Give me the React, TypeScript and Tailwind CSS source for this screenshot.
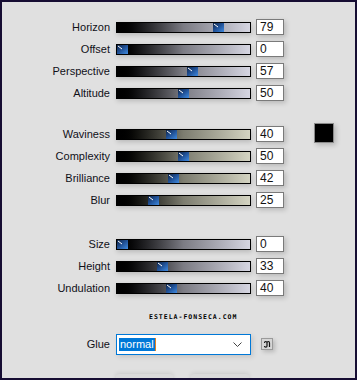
import React from "react";

type Row = { label: string; value: number };

const groupOne: Row[] = [
  { label: "Horizon", value: 79 },
  { label: "Offset", value: 0 },
  { label: "Perspective", value: 57 },
  { label: "Altitude", value: 50 },
];

const groupTwo: Row[] = [
  { label: "Waviness", value: 40 },
  { label: "Complexity", value: 50 },
  { label: "Brilliance", value: 42 },
  { label: "Blur", value: 25 },
];

const groupThree: Row[] = [
  { label: "Size", value: 0 },
  { label: "Height", value: 33 },
  { label: "Undulation", value: 40 },
];

const Thumb = ({ value }: { value: number }) => (
  <svg
    width="11"
    height="9"
    viewBox="0 0 11 9"
    className="absolute top-0"
    style={{ left: (value / 100) * (133 - 11) }}
  >
    <defs>
      <linearGradient id="thumbGrad" x1="0" y1="0" x2="1" y2="1">
        <stop offset="0" stopColor="#0f2445" />
        <stop offset="0.45" stopColor="#1f4e92" />
        <stop offset="1" stopColor="#3f8ae0" />
      </linearGradient>
    </defs>
    <rect x="0" y="0" width="11" height="9" fill="url(#thumbGrad)" />
    <line x1="1" y1="1" x2="5" y2="4" stroke="#ffffff" strokeWidth="1" />
  </svg>
);

const SliderRow = ({
  row,
  tone,
  extra,
}: {
  row: Row;
  tone: "lilac" | "khaki";
  extra?: React.ReactNode;
}) => (
  <div className="flex h-[22px] items-center">
    <div className="w-[108px] text-right text-[11px] text-[#101018]">
      {row.label}
    </div>
    <div
      className={
        tone === "lilac"
          ? "relative ml-[6px] h-[11px] w-[135px] border border-black bg-gradient-to-r from-black via-[#7c7c84] to-[#d6d6e2] shadow-[1px_2px_5px_rgba(0,0,0,0.18)]"
          : "relative ml-[6px] h-[11px] w-[135px] border border-black bg-gradient-to-r from-black via-[#7d7d70] to-[#d4d4c2] shadow-[1px_2px_5px_rgba(0,0,0,0.18)]"
      }
    >
      <Thumb value={row.value} />
    </div>
    <div className="ml-[5px] flex h-[16px] w-[28px] items-center border border-[#7a7a7a] bg-white pl-[3px] text-[12px] leading-none text-[#111] shadow-[2px_2px_5px_rgba(0,0,0,0.18)]">
      {row.value}
    </div>
    {extra}
  </div>
);

export default function App() {
  return (
    <div
      className="flex h-[380px] w-[357px] flex-col overflow-hidden border-2 border-[#160d33] bg-[#e0e0e0] pt-[14px]"
      style={{ fontFamily: '"Liberation Sans", Arial, sans-serif' }}
    >
      <div className="flex flex-col">
        {groupOne.map((r) => (
          <SliderRow key={r.label} row={r} tone="lilac" />
        ))}
      </div>

      <div className="mt-[19px] flex flex-col">
        {groupTwo.map((r, i) => (
          <SliderRow
            key={r.label}
            row={r}
            tone="khaki"
            extra={
              i === 0 ? (
                <div className="ml-[30px] -mt-[2px] h-[20px] w-[20px] border border-[#8a8a8a] bg-black shadow-[2px_2px_5px_rgba(0,0,0,0.2)]" />
              ) : null
            }
          />
        ))}
      </div>

      <div className="mt-[22px] flex flex-col">
        {groupThree.map((r) => (
          <SliderRow key={r.label} row={r} tone="lilac" />
        ))}
      </div>

      {/* watermark */}
      <div className="mt-[14px] flex h-[10px] items-center pl-[147px]">
        <span
          className="text-[6.5px] font-bold tracking-[1px] text-black"
          style={{ fontFamily: '"DejaVu Sans Mono", monospace' }}
        >
          ESTELA-FONSECA.COM
        </span>
      </div>

      <div className="mt-[11px] flex h-[21px] items-center">
        <div className="w-[108px] text-right text-[11px] text-[#101018]">Glue</div>
        <div className="ml-[6px] flex h-[21px] w-[135px] items-center justify-between border border-[#0078d7] bg-white pl-[2px] pr-[8px] shadow-[2px_2px_5px_rgba(0,0,0,0.12)]">
          <span className="flex items-center">
            <span className="bg-[#0078d7] px-[1px] text-[11px] leading-[13px] text-white">
              normal
            </span>
            <span className="h-[13px] w-[1px] bg-[#e8801a]" />
          </span>
          <svg width="9" height="5" viewBox="0 0 9 5">
            <polyline points="0.5,0.5 4.5,4.5 8.5,0.5" fill="none" stroke="#444" strokeWidth="1" />
          </svg>
        </div>
        <div className="ml-[10px] flex h-[12px] w-[12px] items-center justify-center border border-[#9a9a9a] bg-[#d6d6d6] shadow-[2px_2px_4px_rgba(0,0,0,0.18)]">
          <svg width="8" height="8" viewBox="0 0 8 8">
            <path
              d="M1.5 3 C1.5 1 4 1 4 3 L4 6 C4 7.5 1.5 7.5 1.5 6 M4 3 C4 1 6.5 1 6.5 3 L6.5 7"
              fill="none"
              stroke="#111"
              strokeWidth="1.2"
            />
          </svg>
        </div>
      </div>

      <div className="mt-[19px] flex h-[10px] pl-[114px]">
        <div className="h-[10px] w-[57px] rounded-t-[3px] bg-[#dadada] shadow-[0_-1px_4px_rgba(0,0,0,0.1)]" />
        <div className="ml-[18px] h-[10px] w-[58px] rounded-t-[3px] bg-[#dadada] shadow-[0_-1px_4px_rgba(0,0,0,0.1)]" />
      </div>
    </div>
  );
}
